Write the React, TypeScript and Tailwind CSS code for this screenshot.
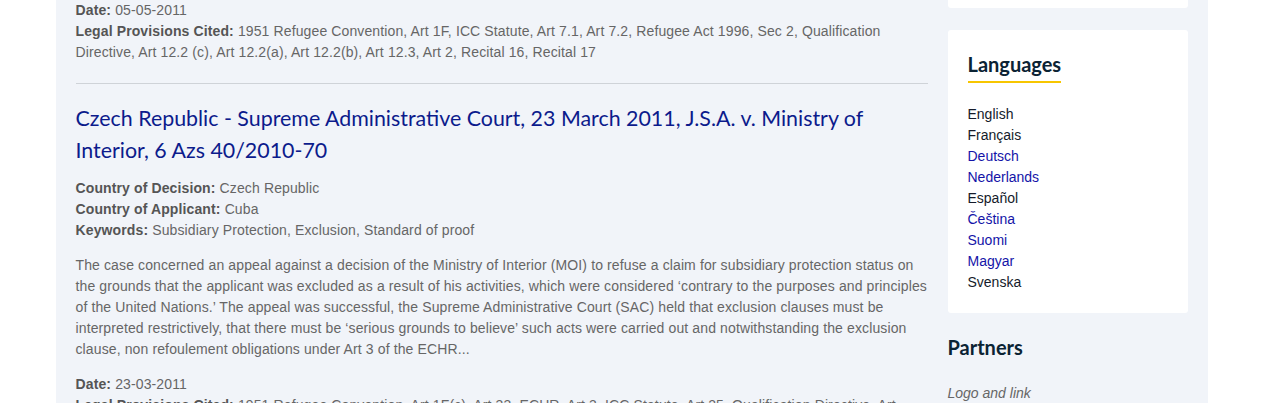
const languages = [
  { name: 'English', link: false },
  { name: 'Français', link: false },
  { name: 'Deutsch', link: true },
  { name: 'Nederlands', link: true },
  { name: 'Español', link: false },
  { name: 'Čeština', link: true },
  { name: 'Suomi', link: true },
  { name: 'Magyar', link: true },
  { name: 'Svenska', link: false },
]

const Field = ({ label, value }: { label: string; value: string }) => (
  <p>
    <span className="font-bold text-[#555]">{label}:</span> {value}
  </p>
)

export default function App() {
  return (
    <div className="min-h-screen overflow-hidden bg-white font-['Liberation_Sans',Arial,sans-serif] text-[14px] leading-[21px] tracking-[0.12px] text-[#666]">
      <div className="mx-auto flex h-[403px] w-[1152px] gap-5 overflow-hidden bg-[#f1f4f9] px-5">
        <main className="w-[852px] shrink-0">
          <div className="pb-5">
            <Field label="Date" value="05-05-2011" />
            <Field
              label="Legal Provisions Cited"
              value="1951 Refugee Convention, Art 1F, ICC Statute, Art 7.1, Art 7.2, Refugee Act 1996, Sec 2, Qualification Directive, Art 12.2 (c), Art 12.2(a), Art 12.2(b), Art 12.3, Art 2, Recital 16, Recital 17"
            />
          </div>

          <article className="border-t border-[#cfd3d8] pt-[18px]">
            <h2 className="font-['Lato',sans-serif] text-[21.4px] leading-[32px] tracking-normal text-[#0c1b8c]">
              Czech Republic - Supreme Administrative Court, 23 March 2011, J.S.A. v. Ministry of Interior, 6 Azs
              40/2010-70
            </h2>

            <div className="mt-3">
              <Field label="Country of Decision" value="Czech Republic" />
              <Field label="Country of Applicant" value="Cuba" />
              <Field label="Keywords" value="Subsidiary Protection, Exclusion, Standard of proof" />
            </div>

            <p className="mt-[14px]">
              The case concerned an appeal against a decision of the Ministry of Interior (MOI) to refuse a claim for
              subsidiary protection status on the grounds that the applicant was excluded as a result of his
              activities, which were considered ‘contrary to the purposes and principles of the United Nations.’ The
              appeal was successful, the Supreme Administrative Court (SAC) held that exclusion clauses must be
              interpreted restrictively, that there must be ‘serious grounds to believe’ such acts were carried out and
              notwithstanding the exclusion clause, non refoulement obligations under Art 3 of the ECHR...
            </p>

            <div className="mt-[14px]">
              <Field label="Date" value="23-03-2011" />
              <Field
                label="Legal Provisions Cited"
                value="1951 Refugee Convention, Art 1F(c), Art 33, ECHR, Art 3, ICC Statute, Art 25, Qualification Directive, Art 12.2, Art 17"
              />
            </div>
          </article>
        </main>

        <aside className="w-[240px] shrink-0">
          <div className="-mt-2 h-4 rounded-[3px] bg-white" />

          <section className="mt-[22px] rounded-[3px] bg-white px-5 pb-[20px] pt-[21px]">
            <h3 className="inline-block border-b-2 border-[#f7c600] pb-[4px] font-['Lato',sans-serif] text-[20px] font-bold leading-[26px] tracking-normal text-[#0b2334]">
              Languages
            </h3>
            <ul className="mt-[21px] tracking-normal">
              {languages.map((l) => (
                <li key={l.name} className={l.link ? 'text-[#1414a8]' : 'text-[#151b2a]'}>
                  {l.name}
                </li>
              ))}
            </ul>
          </section>

          <h3 className="mt-[21px] font-['Lato',sans-serif] text-[20px] font-bold leading-[26px] tracking-normal text-[#0b2334]">
            Partners
          </h3>
          <p className="mt-[23px] italic tracking-normal text-[#666]">Logo and link</p>
        </aside>
      </div>
    </div>
  )
}
